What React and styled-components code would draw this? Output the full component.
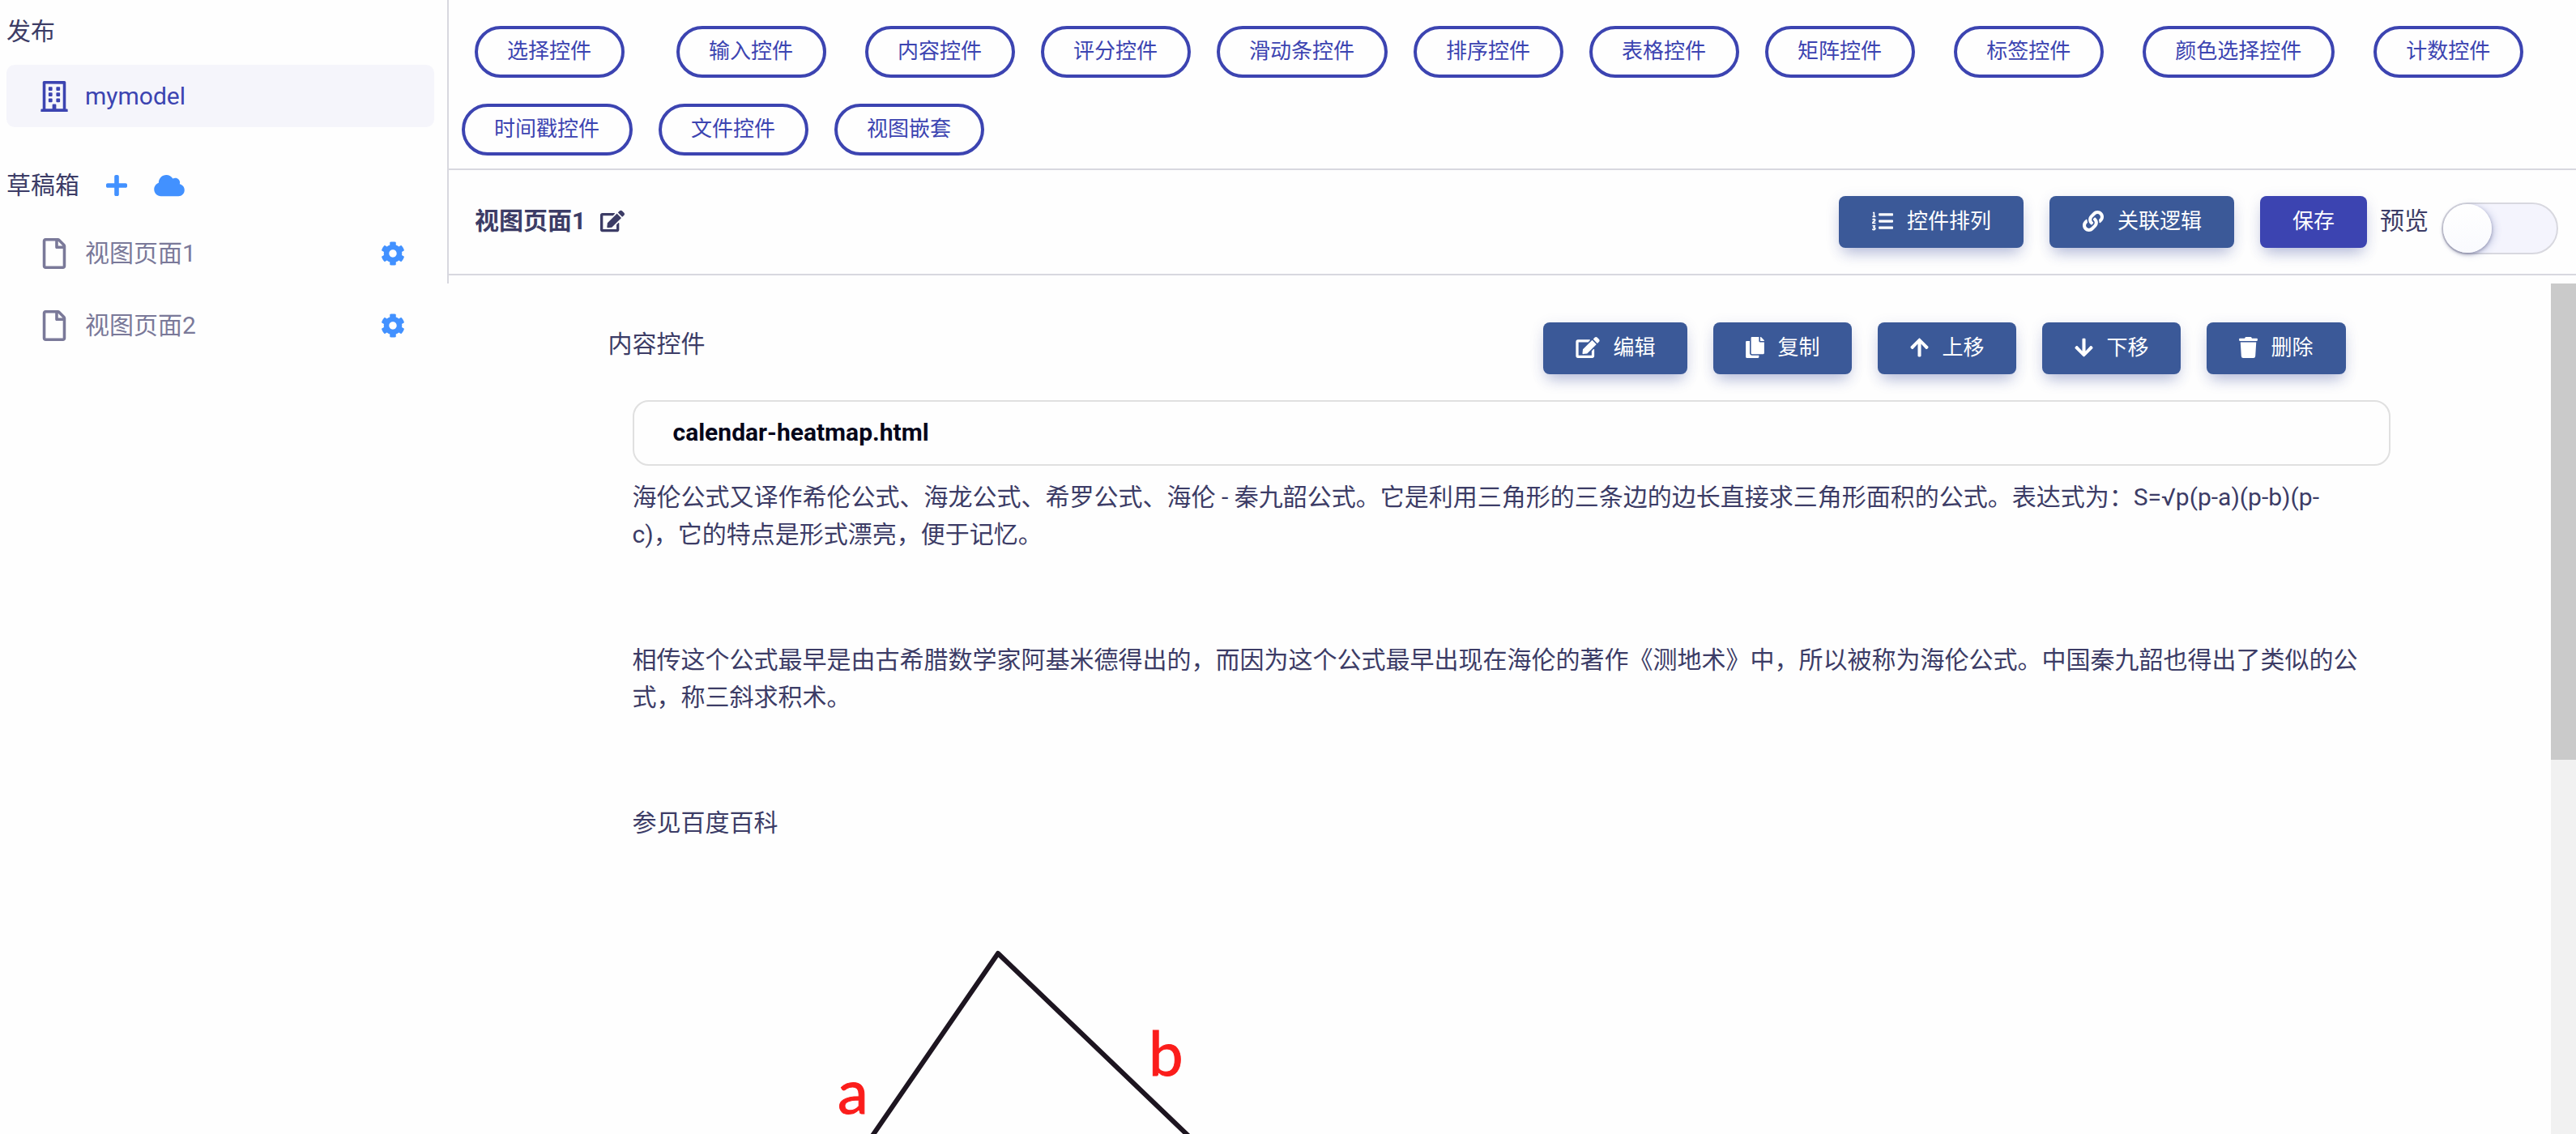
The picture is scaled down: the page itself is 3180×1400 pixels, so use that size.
import React from "react";
import styled, { createGlobalStyle } from "styled-components";
import {
  FaRegBuilding,
  FaRegFile,
  FaPlus,
  FaCloud,
  FaCog,
  FaEdit,
  FaListOl,
  FaLink,
  FaCopy,
  FaArrowUp,
  FaArrowDown,
  FaTrash,
} from "react-icons/fa";

const color = {
  page: "#fefefe",
  text: "#3c3c66",
  muted: "#7a7999",
  primary: "#3c44b1",
  action: "#3b5998",
  accent: "#4291ff",
  line: "#d8d8df",
  active: "#f5f5fb",
};

const GlobalStyle = createGlobalStyle`
  *, *::before, *::after { box-sizing: border-box; }
  body {
    margin: 0;
    background: ${color.page};
    color: ${color.text};
    font-family: Roboto, "Noto Sans CJK SC", sans-serif;
    font-size: 30px;
    line-height: 46px;
  }
  button { font-family: inherit; cursor: pointer; }
  h1, h2, h3, p, ul, figure { margin: 0; padding: 0; }
`;

const Page = styled.div`
  display: flex;
  height: 100vh;
  overflow: hidden;
`;

const Sidebar = styled.nav`
  flex: none;
  width: 552px;
  padding: 16px 16px 0 8px;
`;

const SideHeading = styled.div`
  display: flex;
  align-items: center;
  gap: 33px;
  margin-bottom: ${(p) => p.$space}px;

  h2 {
    font-size: 30px;
    font-weight: 400;
  }
`;

const SideList = styled.ul`
  display: flex;
  flex-direction: column;
  gap: 12px;
  list-style: none;
  margin-bottom: ${(p) => p.$space || 0}px;
`;

const SideItem = styled.li`
  display: flex;
  align-items: center;
  height: 77px;
  padding: 0 36px 0 42px;
  border-radius: 10px;
  background: ${(p) => (p.$active ? color.active : "transparent")};
  color: ${(p) => (p.$active ? color.primary : color.muted)};
`;

const SideLink = styled.a`
  display: flex;
  flex: 1;
  align-items: center;
  color: inherit;
  text-decoration: none;
`;

const SideIcon = styled.span`
  display: flex;
  margin-right: 21px;

  svg {
    width: 34px;
    height: 38px;
  }
`;

const IconButton = styled.button`
  display: flex;
  padding: 0;
  border: 0;
  background: none;
  color: ${(p) => p.$color || color.accent};

  svg {
    width: ${(p) => p.$width || 30}px;
    height: 30px;
  }
`;

const Workspace = styled.div`
  display: flex;
  flex: 1;
  flex-direction: column;
  min-width: 0;
`;

const Header = styled.header`
  flex: none;
  padding-bottom: 10px;
  border-left: 2px solid ${color.line};
`;

const Palette = styled.div`
  display: flex;
  flex-wrap: wrap;
  padding-top: 16px;
  border-bottom: 2px solid ${color.line};
`;

const PaletteButton = styled.button`
  height: 64px;
  margin: 16px 16px 16px ${(p) => p.$lead || 16}px;
  padding: 0 37px 2px 36px;
  border: 4px solid ${color.primary};
  border-radius: 32px;
  background: transparent;
  color: ${color.primary};
  font-size: 26px;
  line-height: 40px;
`;

const TitleBar = styled.div`
  display: flex;
  align-items: flex-start;
  justify-content: space-between;
  height: 130px;
  padding: 32px 22px 0 32px;
  border-bottom: 2px solid ${color.line};
`;

const TitleGroup = styled.div`
  display: flex;
  align-items: center;
  gap: 18px;
  padding-top: 8px;

  h1 {
    font-size: 30px;
    font-weight: 700;
  }
`;

const ButtonRow = styled.div`
  display: flex;
  gap: 32px;
`;

const ActionButton = styled.button`
  display: flex;
  align-items: center;
  gap: 16px;
  height: 64px;
  padding: 0 40px 2px;
  border: 0;
  border-radius: 8px;
  background: ${(p) => (p.$primary ? color.primary : color.action)};
  color: #fff;
  font-size: 26px;
  line-height: 40px;
  box-shadow: 0 4px 18px rgba(59, 68, 150, 0.12),
    0 12px 18px -6px rgba(59, 78, 160, 0.3);

  svg {
    width: ${(p) => p.$iconWidth || 23}px;
    height: 26px;
  }
`;

const TitleTools = styled.div`
  display: flex;
  align-items: flex-start;
`;

const PreviewToggle = styled.label`
  display: flex;
  gap: 16px;
  padding: 8px 0 0 16px;
`;

const Switch = styled.input`
  appearance: none;
  width: 144px;
  height: 64px;
  margin: 0;
  border: 2px solid ${color.line};
  border-radius: 32px;
  background: #f4f4fd;

  &::before {
    content: "";
    display: block;
    width: 60px;
    height: 60px;
    border-radius: 50%;
    background: linear-gradient(#ffffff, #f9fafe);
    box-shadow: 0 2px 4px rgba(60, 60, 100, 0.45),
      4px 2px 10px rgba(60, 80, 160, 0.2);
  }

  &:checked::before {
    margin-left: auto;
  }
`;

const Scroller = styled.div`
  display: flex;
  flex: 1;
  min-height: 0;
`;

const Canvas = styled.main`
  flex: 1;
  min-width: 0;
  overflow: hidden;
  padding: 48px 32px 0;
`;

const Track = styled.div`
  flex: none;
  width: 31px;
  background: #f1f1f1;
`;

const Thumb = styled.div`
  height: 56%;
  background: #cacaca;
`;

const Widget = styled.section`
  max-width: 2200px;
  margin: 0 auto;
`;

const WidgetHeader = styled.div`
  display: flex;
  align-items: flex-start;
  justify-content: space-between;
  padding-right: 55px;
  margin-bottom: 32px;

  h2 {
    padding-top: 4px;
    font-size: 30px;
    font-weight: 400;
  }
`;

const WidgetBody = styled.div`
  padding-left: 30px;
`;

const FileCard = styled.h3`
  height: 81px;
  margin-bottom: 16px;
  padding: 15px 48px;
  border: 2px solid #e0e0e0;
  border-radius: 20px;
  color: #06061a;
  font-size: 30px;
  font-weight: 700;
`;

const Paragraph = styled.p`
  min-height: 45px;
  margin-bottom: 32px;
  padding-right: 38px;
  text-spacing-trim: space-all;
`;

const Figure = styled.figure`
  svg {
    display: block;
    width: 1000px;
    height: 600px;
  }
`;

const palette = [
  { name: "选择控件", lead: 32 },
  { name: "输入控件", lead: 48 },
  { name: "内容控件", lead: 32 },
  { name: "评分控件" },
  { name: "滑动条控件" },
  { name: "排序控件" },
  { name: "表格控件" },
  { name: "矩阵控件" },
  { name: "标签控件", lead: 32 },
  { name: "颜色选择控件", lead: 32 },
  { name: "计数控件", lead: 32 },
  { name: "时间戳控件" },
  { name: "文件控件" },
  { name: "视图嵌套" },
];

const drafts = ["视图页面1", "视图页面2"];

const widgetActions = [
  { name: "编辑", icon: FaEdit, iconWidth: 30 },
  { name: "复制", icon: FaCopy },
  { name: "上移", icon: FaArrowUp },
  { name: "下移", icon: FaArrowDown },
  { name: "删除", icon: FaTrash },
];

const SideLabel = styled.text`
  fill: #fb1d1b;
  stroke: #fb1d1b;
  stroke-width: 1px;
  font-family: Lato, sans-serif;
  font-size: 76px;
`;

function Triangle() {
  return (
    <svg viewBox="0 0 1000 600" role="img" aria-label="三角形">
      <path
        d="M119 588 L451 106 L954 588 Z"
        fill="none"
        stroke="#1d1520"
        strokeWidth="6"
        strokeLinejoin="round"
      />
      <SideLabel x="253" y="304">
        a
      </SideLabel>
      <SideLabel x="637" y="257">
        b
      </SideLabel>
    </svg>
  );
}

export default function App() {
  return (
    <Page>
      <GlobalStyle />
      <Sidebar>
        <SideHeading $space={18}>
          <h2>发布</h2>
        </SideHeading>
        <SideList $space={49}>
          <SideItem $active>
            <SideLink href="#mymodel">
              <SideIcon>
                <FaRegBuilding />
              </SideIcon>
              mymodel
            </SideLink>
          </SideItem>
        </SideList>
        <SideHeading $space={22}>
          <h2>草稿箱</h2>
          <IconButton type="button" aria-label="新建" $width={26}>
            <FaPlus />
          </IconButton>
          <IconButton type="button" aria-label="云端" $width={38}>
            <FaCloud />
          </IconButton>
        </SideHeading>
        <SideList>
          {drafts.map((name) => (
            <SideItem key={name}>
              <SideLink href={"#" + name}>
                <SideIcon>
                  <FaRegFile />
                </SideIcon>
                {name}
              </SideLink>
              <IconButton type="button" aria-label={name + " 设置"}>
                <FaCog />
              </IconButton>
            </SideItem>
          ))}
        </SideList>
      </Sidebar>

      <Workspace>
        <Header>
          <Palette>
            {palette.map((item) => (
              <PaletteButton key={item.name} type="button" $lead={item.lead}>
                {item.name}
              </PaletteButton>
            ))}
          </Palette>
          <TitleBar>
            <TitleGroup>
              <h1>视图页面1</h1>
              <IconButton type="button" aria-label="重命名" $color={color.text}>
                <FaEdit />
              </IconButton>
            </TitleGroup>
            <TitleTools>
              <ButtonRow>
                <ActionButton type="button" $iconWidth={28}>
                  <FaListOl />
                  控件排列
                </ActionButton>
                <ActionButton type="button" $iconWidth={28}>
                  <FaLink />
                  关联逻辑
                </ActionButton>
                <ActionButton type="button" $primary>
                  保存
                </ActionButton>
              </ButtonRow>
              <PreviewToggle>
                预览
                <Switch type="checkbox" role="switch" />
              </PreviewToggle>
            </TitleTools>
          </TitleBar>
        </Header>

        <Scroller>
          <Canvas>
            <Widget>
              <WidgetHeader>
                <h2>内容控件</h2>
                <ButtonRow>
                  {widgetActions.map(({ name, icon: Icon, iconWidth }) => (
                    <ActionButton key={name} type="button" $iconWidth={iconWidth}>
                      <Icon />
                      {name}
                    </ActionButton>
                  ))}
                </ButtonRow>
              </WidgetHeader>
              <WidgetBody>
                <FileCard>calendar-heatmap.html</FileCard>
                <Paragraph>
                  海伦公式又译作希伦公式、海龙公式、希罗公式、海伦 - 秦九韶公式。它是利用三角形的三条边的边长直接求三角形面积的公式。表达式为：S=√p(p-a)(p-b)(p-c)，它的特点是形式漂亮，便于记忆。
                </Paragraph>
                <Paragraph />
                <Paragraph>
                  相传这个公式最早是由古希腊数学家阿基米德得出的，而因为这个公式最早出现在海伦的著作《测地术》中，所以被称为海伦公式。中国秦九韶也得出了类似的公式，称三斜求积术。
                </Paragraph>
                <Paragraph />
                <Paragraph>参见百度百科</Paragraph>
                <Figure>
                  <Triangle />
                </Figure>
              </WidgetBody>
            </Widget>
          </Canvas>
          <Track>
            <Thumb />
          </Track>
        </Scroller>
      </Workspace>
    </Page>
  );
}
